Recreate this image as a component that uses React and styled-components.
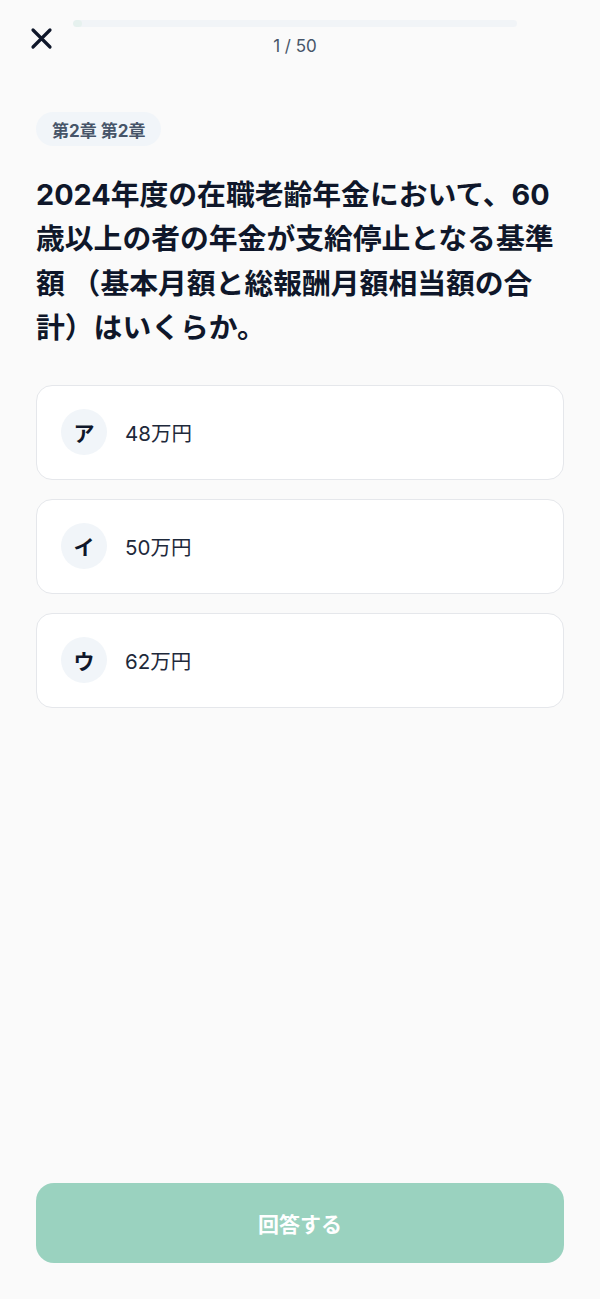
import React, { useState } from "react";
import styled, { createGlobalStyle } from "styled-components";

const Global = createGlobalStyle`
  html, body { margin: 0; padding: 0; background: #fafafa; }
  body { font-family: "Inter", "Noto Sans CJK JP", sans-serif; color: #0f172a; }
  * { box-sizing: border-box; }
`;

const Page = styled.div`
  min-height: 1299px;
  display: flex;
  flex-direction: column;
  background: #fafafa;
`;

const Header = styled.header`
  display: flex;
  align-items: flex-start;
  padding: 20px 83px 0 30px;
  gap: 20px;
`;

const CloseButton = styled.button`
  width: 23px;
  height: 23px;
  margin-top: 7px;
  padding: 0;
  border: none;
  background: transparent;
  display: flex;
  align-items: center;
  justify-content: center;
  cursor: pointer;
`;

const ProgressColumn = styled.div`
  flex: 1;
  display: flex;
  flex-direction: column;
  align-items: center;
`;

const Track = styled.div`
  width: 100%;
  height: 7px;
  border-radius: 4px;
  background: #f1f4f7;
  overflow: hidden;
`;

const Fill = styled.div`
  height: 100%;
  background: #e6f1ee;
  border-radius: 4px;
`;

const Count = styled.div`
  margin-top: 7px;
  font-size: 17px;
  line-height: 24px;
  color: #475569;
`;

const Main = styled.main`
  flex: 1;
  padding: 54px 36px 0;
  display: flex;
  flex-direction: column;
`;

const Chip = styled.span`
  align-self: flex-start;
  height: 34px;
  padding: 0 16px;
  border-radius: 999px;
  background: #f1f5f9;
  color: #475569;
  font-size: 17px;
  font-weight: 700;
  display: inline-flex;
  align-items: center;
`;

const Question = styled.h1`
  margin: 27px 0 0;
  font-size: 28.8px;
  line-height: 44.4px;
  font-weight: 700;
  color: #0f172a;
  letter-spacing: 0;
`;

const Options = styled.div`
  margin-top: 34px;
  display: flex;
  flex-direction: column;
  gap: 19px;
`;

const OptionCard = styled.button`
  height: 95px;
  width: 100%;
  display: flex;
  align-items: center;
  gap: 18px;
  padding: 0 24px;
  background: ${(p) => (p.$selected ? "#f0faf6" : "#ffffff")};
  border: 1px solid ${(p) => (p.$selected ? "#5fbf9b" : "#e5e7eb")};
  border-radius: 16px;
  font-family: inherit;
  text-align: left;
  cursor: pointer;
`;

const Badge = styled.span`
  width: 46px;
  height: 46px;
  border-radius: 50%;
  background: #f1f5f9;
  display: flex;
  align-items: center;
  justify-content: center;
  font-size: 21px;
  font-weight: 700;
  color: #0f172a;
  flex-shrink: 0;
`;

const OptionText = styled.span`
  font-size: 20.5px;
  color: #1e293b;
  font-weight: 400;
`;

const Footer = styled.footer`
  padding: 0 36px 36px;
`;

const SubmitButton = styled.button`
  width: 100%;
  height: 80px;
  border: none;
  border-radius: 18px;
  background: #9ad2bf;
  color: #ffffff;
  font-family: inherit;
  font-size: 21px;
  font-weight: 700;
  cursor: pointer;
`;

const options = [
  { key: "ア", label: "48万円" },
  { key: "イ", label: "50万円" },
  { key: "ウ", label: "62万円" },
];

export default function App() {
  const [selected, setSelected] = useState(null);
  const current = 1;
  const total = 50;
  return (
    <Page>
      <Global />
      <Header>
        <CloseButton aria-label="閉じる">
          <svg width="23" height="23" viewBox="0 0 23 23" fill="none">
            <path d="M3 3 L20 20 M20 3 L3 20" stroke="#0f172a" strokeWidth="3.2" strokeLinecap="round" />
          </svg>
        </CloseButton>
        <ProgressColumn>
          <Track>
            <Fill style={{ width: `${(current / total) * 100}%` }} />
          </Track>
          <Count>{current} / {total}</Count>
        </ProgressColumn>
      </Header>
      <Main>
        <Chip>第2章 第2章</Chip>
        <Question>
          2024年度の在職老齢年金において、60歳以上の者の年金が支給停止となる基準額 （基本月額と総報酬月額相当額の合計）はいくらか。
        </Question>
        <Options>
          {options.map((o) => (
            <OptionCard key={o.key} $selected={selected === o.key} onClick={() => setSelected(o.key)}>
              <Badge>{o.key}</Badge>
              <OptionText>{o.label}</OptionText>
            </OptionCard>
          ))}
        </Options>
      </Main>
      <Footer>
        <SubmitButton>回答する</SubmitButton>
      </Footer>
    </Page>
  );
}
